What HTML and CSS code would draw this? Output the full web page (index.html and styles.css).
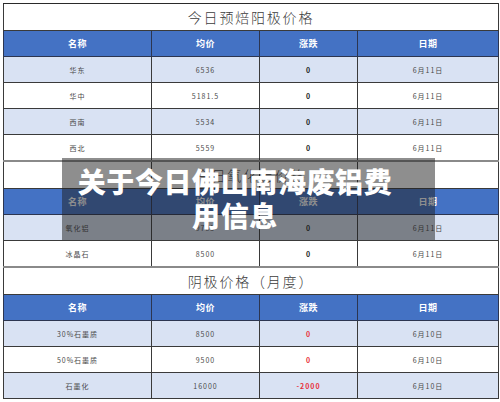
FILE: index.html
```html
<!DOCTYPE html>
<html lang="zh">
<head>
<meta charset="utf-8">
<link rel="stylesheet" href="styles.css">
</head>
<body>
<div class="page">
  <table class="prices">
    <colgroup>
      <col class="c1"><col class="c2"><col class="c3"><col class="c4">
    </colgroup>
    <tr class="title first"><td colspan="4">今日预焙阳极价格</td></tr>
    <tr class="head"><th>名称</th><th>均价</th><th>涨跌</th><th>日期</th></tr>
    <tr class="odd"><td>华东</td><td>6536</td><td class="chg">0</td><td>6月11日</td></tr>
    <tr><td>华中</td><td>5181.5</td><td class="chg">0</td><td>6月11日</td></tr>
    <tr class="odd"><td>西南</td><td>5534</td><td class="chg">0</td><td>6月11日</td></tr>
    <tr><td>西北</td><td>5559</td><td class="chg">0</td><td>6月11日</td></tr>
    <tr class="title lined"><td colspan="4">今日氧化铝价格</td></tr>
    <tr class="head"><th>名称</th><th>均价</th><th>涨跌</th><th>日期</th></tr>
    <tr class="odd"><td>氧化铝</td><td>9785</td><td class="chg">0</td><td>6月11日</td></tr>
    <tr><td>冰晶石</td><td>8500</td><td class="chg">0</td><td>6月11日</td></tr>
    <tr class="title"><td colspan="4">阴极价格（月度）</td></tr>
    <tr class="head"><th>名称</th><th>均价</th><th>涨跌</th><th>日期</th></tr>
    <tr class="odd"><td>30%石墨质</td><td>8500</td><td class="chg red">0</td><td>6月10日</td></tr>
    <tr><td>50%石墨质</td><td>9500</td><td class="chg red">0</td><td>6月10日</td></tr>
    <tr class="odd"><td>石墨化</td><td>16000</td><td class="chg red">-2000</td><td>6月10日</td></tr>
  </table>
  <div class="overlay">
    <div class="headline">关于今日佛山南海废铝费用信息</div>
  </div>
</div>
</body>
</html>
```
FILE: styles.css
```css
html, body {
  margin: 0;
  padding: 0;
  background: #ffffff;
}
.page {
  position: relative;
  width: 500px;
  height: 402px;
  padding: 3px 0 0 3px;
  box-sizing: border-box;
  font-family: "Noto Sans CJK SC", "Noto Sans", sans-serif;
}
.prices {
  border-collapse: collapse;
  table-layout: fixed;
  width: 495px;
  border: 1px solid #2a2a2a;
}
.c1 { width: 148px; }
.c2 { width: 108px; }
.c3 { width: 98px; }
.c4 { width: 141px; }
.prices td, .prices th {
  border: 1px solid #3a3a3a;
  text-align: center;
  padding: 0;
  height: 25px;
  font-size: 7px;
  letter-spacing: 1px;
  color: #4a4a4a;
}
.prices tr.title td {
  height: 26px;
  font-size: 14px;
  letter-spacing: 1.8px;
  color: #3c3c3c;
  font-weight: 300;
  background: #ffffff;
  border-top: 2px solid #8a8a8a;
}
.prices tr.title.first td {
  border-top: 1px solid #2a2a2a;
}
.prices tr.title.lined td {
  background-image:
    linear-gradient(#3a3a3a, #3a3a3a),
    linear-gradient(#3a3a3a, #3a3a3a),
    linear-gradient(#3a3a3a, #3a3a3a);
  background-size: 1px 100%;
  background-repeat: no-repeat;
  background-position: 147px 0, 255px 0, 353px 0;
}
.prices tr.head th {
  height: 25px;
  background: #4472c4;
  color: #ffffff;
  font-size: 9px;
  font-weight: 700;
  letter-spacing: 0.5px;
  border-color: #2c3550;
}
.prices tr.odd td {
  background: #d9e2f3;
}
.prices td.chg {
  font-weight: 700;
  color: #222222;
  font-size: 7px;
}
.prices td.red {
  color: #e8313a;
}
.overlay {
  position: absolute;
  left: 62px;
  top: 158px;
  width: 373px;
  height: 82px;
  background: rgba(30, 30, 30, 0.5);
  box-sizing: border-box;
  padding: 6px 42px 0 15px;
}
.headline {
  color: #ffffff;
  font-size: 28px;
  font-weight: 900;
  line-height: 34px;
  letter-spacing: 0.6px;
  text-align: center;
}
```
